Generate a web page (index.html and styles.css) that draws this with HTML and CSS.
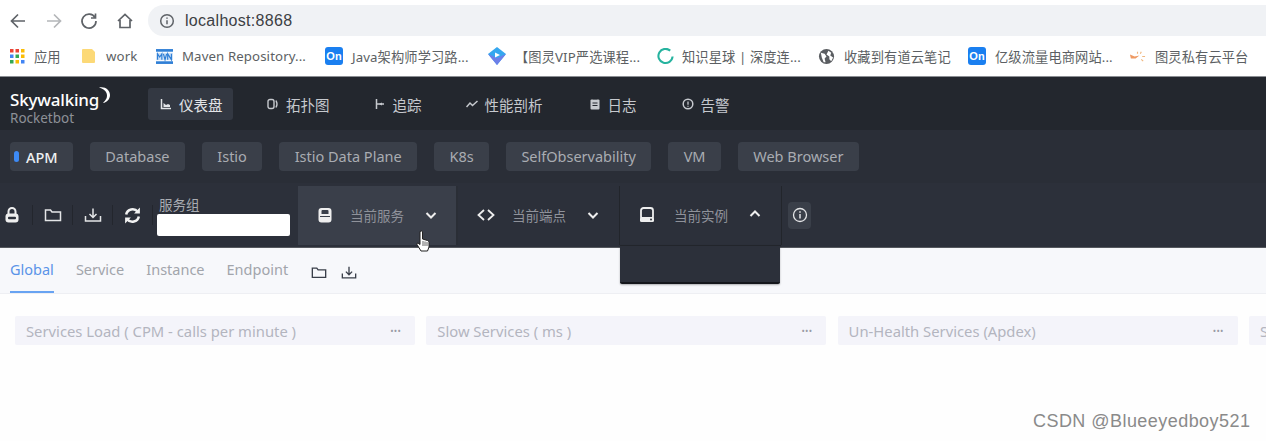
FILE: index.html
```html
<!DOCTYPE html>
<html lang="zh">
<head>
<meta charset="utf-8">
<title>Rocketbot</title>
<link rel="stylesheet" href="styles.css">
</head>
<body>
<div class="chrome">
  <div class="toolbar">
    <div class="navbtns">
      <svg class="nb" viewBox="0 0 20 20"><path d="M17 10H4M10 3.5 3.5 10l6.500 6.500"/></svg>
      <svg class="nb off" viewBox="0 0 20 20"><path d="M3 10h13M10 3.500 16.500 10 10 16.500"/></svg>
      <svg class="nb" viewBox="0 0 20 20"><path d="M16 6.500A7 7 0 1 0 17 10M16.500 2.500v4.500H12"/></svg>
      <svg class="nb" viewBox="0 0 20 20"><path d="M3 10l7-6.500 7 6.500M5 9v7.500h10V9"/></svg>
    </div>
    <div class="omnibox">
      <svg class="infoi" viewBox="0 0 16 16"><circle cx="8" cy="8" r="6.300"/><path d="M8 7.200v4M8 4.500v1.300"/></svg>
      <span class="url">localhost:8868</span>
    </div>
  </div>
  <div class="bookmarks">
    <div class="bm b1"><svg class="bi" viewBox="0 0 15 15"><g><rect x="0" y="0" width="3.500" height="3.500" fill="#ea4335"/><rect x="5.500" y="0" width="3.500" height="3.500" fill="#ea4335"/><rect x="11" y="0" width="3.500" height="3.500" fill="#fbbc05"/><rect x="0" y="5.500" width="3.500" height="3.500" fill="#4285f4"/><rect x="5.500" y="5.500" width="3.500" height="3.500" fill="#34a853"/><rect x="11" y="5.500" width="3.500" height="3.500" fill="#fbbc05"/><rect x="0" y="11" width="3.500" height="3.500" fill="#34a853"/><rect x="5.500" y="11" width="3.500" height="3.500" fill="#fbbc05"/><rect x="11" y="11" width="3.500" height="3.500" fill="#4285f4"/></g></svg><span>应用</span></div>
    <div class="bm b2"><svg class="bi" viewBox="0 0 15 16"><path d="M1 2q0-1 1-1h9l3 3v10q0 1-1 1H2q-1 0-1-1z" fill="#fcd977"/></svg><span>work</span></div>
    <div class="bm b3"><svg class="bi" viewBox="0 0 16 16"><rect x="0" y="1" width="16" height="2.500" fill="#2f7fd6"/><rect x="0" y="12.500" width="16" height="2.500" fill="#2f7fd6"/><rect x="0" y="4.500" width="16" height="7" fill="#cfe2f7"/><path d="M1.500 11V5.500l2 3 2-3V11M7 5.500l1.500 5.500 1.500-5.500M11 11V5.500l3.500 5.500V5.500" fill="none" stroke="#2f7fd6" stroke-width="1.100"/></svg><span>Maven Repository...</span></div>
    <div class="bm b4"><b class="on">On</b><span>Java架构师学习路...</span></div>
    <div class="bm b5"><svg class="bi" viewBox="0 0 18 18"><path d="M9 0l9 7-9 11L0 7z" fill="#35a7ef"/><path d="M9 11l9-4-9 11L0 7z" fill="#6d7fe8"/><path d="M7 5.500l5 2.500-5 2.500z" fill="#fff"/></svg><span>【图灵VIP严选课程...</span></div>
    <div class="bm b6"><svg class="bi" viewBox="0 0 18 18"><path d="M14 2.800A7.500 7.500 0 1 0 16.500 9" fill="none" stroke="#26b39f" stroke-width="2.200"/></svg><span>知识星球 | 深度连...</span></div>
    <div class="bm b7"><svg class="bi" viewBox="0 0 18 18"><circle cx="9" cy="9" r="8" fill="#5a5d61"/><path d="M3 5l4 1 2 3-2 2 1 4-2 0-2-5zM11 3l3 2-1 3 3 2-2 4-2-2 0-3-3-2z" fill="#fff"/></svg><span>收藏到有道云笔记</span></div>
    <div class="bm b8"><b class="on">On</b><span>亿级流量电商网站...</span></div>
    <div class="bm b9"><svg class="bi" viewBox="0 0 18 12"><path d="M1 4l5 2 5-1-4 3-5 0z" fill="#ef9a63"/><path d="M12 3l1-2M14 6h3M13 9l2 2M9 3l0-2" stroke="#f0b77f" stroke-width="1.200"/></svg><span>图灵私有云平台</span></div>
  </div>
</div>

<header class="topnav">
  <div class="logo">
    <div class="logo-main">Skywalking<svg class="moon" viewBox="0 0 14 18"><path d="M2 1.500C8 0 13 4 13 9c0 4-3 7.500-7 8 3-3 5-6 3.500-10C8.500 4.500 6 2.500 2 1.500z" fill="#fff"/></svg></div>
    <div class="logo-sub">Rocketbot</div>
  </div>
  <nav class="menu">
    <a class="mi active"><svg class="mic" viewBox="0 0 12 12"><path d="M1.500 1v9.500H11" fill="none" stroke="#e3e5e8" stroke-width="1.500"/><path d="M3.500 9V5l2.500 2 2-1 2 1v2z" fill="#e3e5e8"/></svg>仪表盘</a>
    <a class="mi m2"><svg class="mic" viewBox="0 0 12 12"><rect x="1" y="1.500" width="6" height="9" rx="2" fill="none" stroke="#c6c9ce" stroke-width="1.400"/><path d="M9 2.500q2 3.500 0 7" fill="none" stroke="#c6c9ce" stroke-width="1.400"/></svg>拓扑图</a>
    <a class="mi m3"><svg class="mic" viewBox="0 0 12 12"><path d="M2.500 1v10M2.500 6H10" fill="none" stroke="#c6c9ce" stroke-width="1.500"/><path d="M5 6l3-1.500v3z" fill="#c6c9ce"/></svg>追踪</a>
    <a class="mi m4"><svg class="mic" viewBox="0 0 12 12"><path d="M.5 9l3.500-4 2.500 2.500L11.500 3" fill="none" stroke="#c6c9ce" stroke-width="1.500"/></svg>性能剖析</a>
    <a class="mi m5"><svg class="mic" viewBox="0 0 12 12"><rect x="1.500" y="1.500" width="9" height="10" rx="1" fill="#c6c9ce"/><path d="M4 .8h4M3.500 5h5M3.500 7.500h5" stroke="#23272e" stroke-width="1"/></svg>日志</a>
    <a class="mi m6"><svg class="mic" viewBox="0 0 12 12"><circle cx="6" cy="6" r="4.800" fill="none" stroke="#c6c9ce" stroke-width="1.500"/><path d="M6 3.500v3.200M6 7.800v1" stroke="#c6c9ce" stroke-width="1.300"/></svg>告警</a>
  </nav>
</header>

<div class="layers">
  <div class="pill cur"><i class="dot"></i>APM</div>
  <div class="pill">Database</div>
  <div class="pill">Istio</div>
  <div class="pill">Istio Data Plane</div>
  <div class="pill">K8s</div>
  <div class="pill">SelfObservability</div>
  <div class="pill">VM</div>
  <div class="pill">Web Browser</div>
</div>

<div class="tools">
  <div class="tbtn"><svg class="ti tall" viewBox="0 0 14 16"><path d="M3.500 7V4.500a3.500 3.500 0 0 1 7 0V7" fill="none" stroke="#eee" stroke-width="2"/><rect x="0.500" y="6.500" width="13" height="9" rx="3" fill="#eee"/><rect x="3" y="9.800" width="8" height="2.400" rx="1" fill="#2c303a"/></svg></div>
  <div class="tbtn"><svg class="ti wide" viewBox="0 0 18 16"><path d="M1.500 13.500V3h5l1.500 2h8.500v8.500z" fill="none" stroke="#e4e5e7" stroke-width="1.500"/></svg></div>
  <div class="tbtn"><svg class="ti wide" viewBox="0 0 18 16"><path d="M1.500 9v5h15V9M9 1.500V10M5.500 7 9 10.500 12.500 7" fill="none" stroke="#e4e5e7" stroke-width="1.500"/></svg></div>
  <div class="tbtn"><svg class="ti big" viewBox="0 0 18 18"><path d="M3 8a6.200 6.200 0 0 1 11-2.500M15 10a6.200 6.200 0 0 1-11 2.500" fill="none" stroke="#f2f2f2" stroke-width="2.400"/><path d="M16 1.500v5.500h-5.500zM2 16.500V11h5.500z" fill="#f2f2f2"/></svg></div>
  <div class="group">
    <label class="group-l">服务组</label>
    <div class="group-i"></div>
  </div>
  <div class="sel hot">
    <svg class="si" viewBox="0 0 16 16"><path fill-rule="evenodd" d="M4.500 1h7a3 3 0 0 1 3 3v8.500a3 3 0 0 1-3 3h-7a3 3 0 0 1-3-3V4a3 3 0 0 1 3-3zM5.500 3a1 1 0 0 0-1 1v3h7V4a1 1 0 0 0-1-1zM3 9v1h10V9z" fill="#eee"/></svg>
    <span class="st">当前服务</span>
    <svg class="chev" viewBox="0 0 12 12"><path d="M1.500 4l4.500 4.500L10.500 4" fill="none" stroke="#eee" stroke-width="2"/></svg>
  </div>
  <div class="sel code">
    <svg class="si" viewBox="0 0 18 16"><path d="M7 3 1.500 8 7 13M11 3l5.500 5-5.500 5" fill="none" stroke="#eee" stroke-width="1.800"/></svg>
    <span class="st">当前端点</span>
    <svg class="chev" viewBox="0 0 12 12"><path d="M1.500 4l4.500 4.500L10.500 4" fill="none" stroke="#eee" stroke-width="2"/></svg>
  </div>
  <div class="sel open">
    <svg class="si" viewBox="0 0 16 16"><rect x="2" y="1" width="12" height="11" rx="2.500" fill="none" stroke="#eee" stroke-width="1.800"/><rect x="1" y="10" width="14" height="5" rx="1.500" fill="#eee"/><circle cx="12" cy="12.500" r="1" fill="#2c303a"/></svg>
    <span class="st">当前实例</span>
    <svg class="chev" viewBox="0 0 12 12"><path d="M1.500 8 6 3.500 10.500 8" fill="none" stroke="#eee" stroke-width="2"/></svg>
    <div class="dropdown"></div>
  </div>
  <div class="infobtn"><svg class="ti" viewBox="0 0 16 16"><circle cx="8" cy="8" r="6.500" fill="none" stroke="#e4e5e7" stroke-width="1.300"/><path d="M8 7v4.500M8 4.200v1.500" stroke="#e4e5e7" stroke-width="1.500"/></svg></div>
</div>

<div class="tabs">
  <a class="tab active">Global</a>
  <a class="tab">Service</a>
  <a class="tab">Instance</a>
  <a class="tab">Endpoint</a>
  <svg class="tabic first" viewBox="0 0 18 16"><path d="M1.500 13.500V3h5l1.500 2h8.500v8.500z" fill="none" stroke="#3a3f4a" stroke-width="1.500"/></svg>
  <svg class="tabic" viewBox="0 0 18 16"><path d="M1.500 9v5h15V9M9 1.500V10M5.500 7 9 10.500 12.500 7" fill="none" stroke="#3a3f4a" stroke-width="1.500"/></svg>
</div>

<main class="charts">
  <section class="card"><span>Services Load ( CPM - calls per minute )</span><em class="dots">•••</em></section>
  <section class="card"><span>Slow Services ( ms )</span><em class="dots">•••</em></section>
  <section class="card"><span>Un-Health Services (Apdex)</span><em class="dots">•••</em></section>
  <section class="card"><span>Slow Endpoints ( ms )</span><em class="dots">•••</em></section>
</main>

<svg class="cursor" viewBox="0 0 14 22"><path d="M4 1.500q1.500-1 2.500 0V9l5 1.500q1.500.5 1.500 2V17l-1.500 4H5L1 14.500q-.5-1.500 1-1.500l2 1.500z" fill="#fff" stroke="#222" stroke-width="1"/><path d="M7 11v5M9 11.500V16M11 12v4" stroke="#222" stroke-width=".7"/></svg>
<div class="watermark">CSDN @Blueeyedboy521</div>
</body>
</html>
```

FILE: styles.css
```css
* { box-sizing: border-box; }
html, body { margin: 0; padding: 0; }
body {
  width: 1266px;
  height: 441px;
  overflow: hidden;
  position: relative;
  background: #fefefe;
  font-family: "Noto Sans", "Noto Sans CJK SC", sans-serif;
}

/* browser chrome */
.chrome { height: 77px; background: #fff; border-bottom: 1px solid #8b8e93; }
.toolbar { height: 36px; display: flex; padding-top: 5px; }
.navbtns { width: 148px; display: flex; align-items: center; padding-left: 8px; gap: 15.500px; }
.nb { width: 20px; height: 20px; fill: none; stroke: #5f6368; stroke-width: 1.700; }
.nb.off { stroke: #b4b6b9; }
.omnibox {
  flex: 1;
  background: #f0f2f5;
  border-radius: 16px 0 0 16px;
  display: flex;
  align-items: center;
  padding-left: 11px;
}
.infoi { width: 16px; height: 16px; fill: none; stroke: #5f6368; stroke-width: 1.500; }
.url { margin-left: 10px; font-size: 16px; color: #3c4043; font-family: "Liberation Sans", sans-serif; letter-spacing: .3px; }
.bookmarks { position: relative; height: 40px; display: flex; align-items: center; font-size: 13.250px; letter-spacing: .1px; color: #5c5f63; }
.bm { display: flex; align-items: center; white-space: nowrap; }
.bi { width: 17px; height: 17px; flex: none; }
.on {
  width: 18px; height: 18px; flex: none;
  background: #1a7ff0; color: #fff; border-radius: 3px;
  font: 700 11px/18px "Liberation Sans", sans-serif; text-align: center;
}
.bm span { margin-left: 9px; }
.b1 { margin-left: 10px; width: 71px; }
.b1 .bi { width: 15px; height: 15px; }
.b2 { width: 75px; }
.b2 .bi { width: 15px; height: 16px; }
.b2 span { margin-left: 10px; }
.b3 { width: 169px; }
.b4 { width: 163px; }
.b5 { width: 169px; }
.b5 .bi { width: 18px; height: 18px; }
.b6 { width: 161px; }
.b6 span { margin-left: 8px; }
.b7 { width: 150px; }
.b8 { width: 161px; }
.b9 { width: 125px; }

/* dark header */
.topnav { height: 53px; background: #23272e; display: flex; }
.logo { width: 148px; padding: 12px 0 0 10px; color: #fff; }
.logo-main { display: flex; align-items: flex-start; font-size: 17px; line-height: 21px; letter-spacing: -.2px; font-weight: 500; }
.moon { width: 14px; height: 18px; margin-top: -3px; margin-left: -2px; }
.logo-sub { font-size: 13.500px; line-height: 15px; color: #8d9097; margin-top: 1px; }
.menu { display: flex; align-items: flex-start; padding-top: 11px; }
.mi {
  height: 32px; display: flex; align-items: center;
  font-size: 14.500px; color: #c6c9ce; white-space: nowrap; border-radius: 3px;
}
.mic { width: 12px; height: 12px; margin-right: 7px; flex: none; }
.mi.active { width: 85px; padding-left: 12px; background: #333842; color: #e3e5e8; margin-right: 34px; }
.m2 { margin-right: 44px; }
.m3 { margin-right: 44px; }
.m4 { margin-right: 46px; }
.m5 { margin-right: 45px; }

/* layer pills */
.layers { height: 53px; background: #2a2e37; display: flex; align-items: flex-start; gap: 16.750px; padding: 12px 0 0 10px; }
.pill {
  height: 29px; padding: 0 15.500px;
  background: #3a3f49; color: #a9acb2;
  border-radius: 4px; font-size: 14.500px; line-height: 28px; white-space: nowrap;
}
.pill.cur { display: flex; align-items: center; width: 63px; padding: 0 0 0 4px; color: #eef0f2; font-weight: 500; }
.dot { width: 5px; height: 11px; border-radius: 3px; background: #3d8af5; margin-right: 7px; }

/* toolbar */
.tools { height: 65px; background: #2c303a; display: flex; align-items: center; border-bottom: 1px solid #55585e; }
.tbtn { width: 40px; height: 20px; display: flex; align-items: center; justify-content: center; border-right: 1px solid #23262d; flex: none; }
.tbtn:first-child { width: 33px; padding-right: 9px; }
.ti { width: 16px; height: 16px; }
.ti.tall { width: 14px; height: 16px; }
.ti.wide { width: 18px; height: 16px; }
.ti.big { width: 19px; height: 19px; }
.group { width: 145px; padding-left: 4px; display: flex; flex-direction: column; margin-top: 4px; }
.group-l { font-size: 13.500px; line-height: 17px; color: #a9acb2; padding-left: 2px; margin-top: -1px; }
.group-i { width: 133px; height: 22px; background: #fff; border-radius: 2px; margin-top: 0; }
.sel {
  position: relative; width: 161px; height: 59px; flex: none;
  display: flex; align-items: center; font-size: 13.500px; color: #8f929a;
}
.sel.hot { background: #3a3f4a; width: 160px; border-right: 2px solid #2a2e36; }
.sel.open { box-shadow: -1px 0 0 #22252b, 1px 0 0 #22252b, 0 1px 0 #22252b; margin-left: 1px; }
.si { width: 16px; height: 16px; margin-left: 19px; flex: none; }
.code .si { width: 18px; }
.st { margin-left: 17px; width: 54px; white-space: nowrap; }
.open .st { margin-left: 19px; }
.chev { width: 12px; height: 12px; margin-left: 21px; }
.sel.open .chev { margin-top: -3px; }
.dropdown {
  position: absolute; left: 0; top: 59px; width: 160px; height: 39px;
  background: #2c303a; border-radius: 0 0 2px 2px;
  border-top: 1px solid #22252b;
  border-bottom: 2px solid #15171c; box-shadow: 0 1px 2px rgba(0, 0, 0, .3);
  z-index: 3;
}
.infobtn { width: 23px; height: 27px; margin: 0 0 0 7px; background: #3a3f49; border-radius: 4px; display: flex; align-items: center; justify-content: center; }

/* tabs */
.tabs { height: 46px; background: #f7f8fb; display: flex; align-items: flex-start; padding-left: 10px; gap: 22px; border-bottom: 1px solid #eeeff3; }
.tab { height: 45px; padding-top: 10px; font-size: 14.500px; line-height: 22px; color: #a2a5ab; white-space: nowrap; }
.tab.active { color: #5b94e8; border-bottom: 2px solid #68a3f2; }
.tabic { width: 16px; height: 15px; margin-top: 17px; margin-left: -8px; }
.tabic.first { margin-left: 1px; }

/* charts */
.charts { display: flex; gap: 11.300px; padding: 22px 0 0 15px; overflow: hidden; }
.card {
  flex: none; width: 400px; height: 29px; padding: 0 14px 0 11px;
  background: #f4f4fa; border-radius: 2px;
  display: flex; align-items: center; justify-content: space-between;
  font-size: 14.800px; color: #b3b5bf; white-space: nowrap;
}
.dots { font-style: normal; font-size: 9px; letter-spacing: .2px; color: #9a9ca6; }

/* overlays */
.cursor { position: absolute; left: 416px; top: 230px; width: 14px; height: 22px; z-index: 5; }
.watermark {
  position: absolute; left: 1033px; top: 411px;
  font: 18px/20px "Liberation Sans", sans-serif; color: #8a8a8a; letter-spacing: .45px;
}
```
